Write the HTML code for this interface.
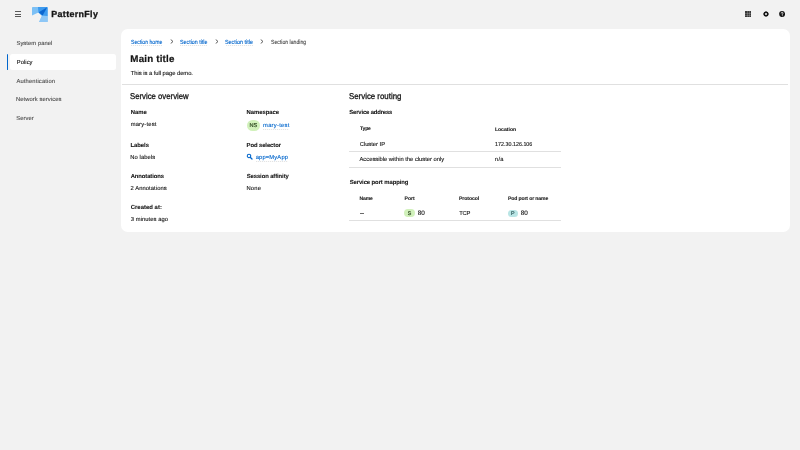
<!DOCTYPE html>
<html><head><meta charset="utf-8">
<style>
html,body{margin:0;padding:0;width:800px;height:450px;overflow:hidden;background:#f2f2f2;font-family:"Liberation Sans",sans-serif;}
#root{position:absolute;left:0;top:0;width:800px;height:450px;will-change:transform;}
.t{position:absolute;white-space:nowrap;line-height:1;text-rendering:geometricPrecision;-webkit-text-stroke:0.12px currentColor;}
.dot{position:absolute;height:1px;background:repeating-linear-gradient(90deg,rgba(120,120,120,.2) 0 1px,rgba(120,120,120,.04) 1px 2px);}
.abs{position:absolute;}
.ln{position:absolute;height:1px;background:#e0e0e0;}
</style></head><body><div id="root">
<!-- masthead: hamburger -->
<div class="abs" style="left:15.1px;top:11px;width:5.7px;height:1px;background:#5a5a5a"></div>
<div class="abs" style="left:15.1px;top:13.6px;width:5.7px;height:1px;background:#5a5a5a"></div>
<div class="abs" style="left:15.1px;top:16.2px;width:5.7px;height:1px;background:#5a5a5a"></div>
<!-- logo -->
<svg class="abs" style="left:32px;top:6.6px" width="16" height="15.4" viewBox="0 0 16 15.4">
  <path d="M0.8 0 H15 Q15.6 0 15.6 0.8 V14.4 Q15.6 15.2 14.8 15.2 H7 L10 8.8 L6.4 5.4 L0 8.6 V0.8 Q0 0 0.8 0Z" fill="#7cc0f5"/>
  <path d="M6 0 H15 Q15.6 0 15.6 0.8 V9 L10 8.8 L6.4 5.4Z" fill="#3d9bef"/>
  <path d="M15.2 0.3 L6.8 5.2 L10.6 8.6Z" fill="#0b66d0"/>
  <path d="M10 8.8 L15.6 9 V14.4 Q15.6 15.2 14.8 15.2 H7Z" fill="#8ec7f6"/>
</svg>
<!-- header icons -->
<div class="abs" style="left:745px;top:11.2px;width:6px;height:5.6px;background:#3a3a3a"><div class="abs" style="left:1.8px;top:0;width:0.6px;height:5.6px;background:rgba(242,242,242,.22)"></div><div class="abs" style="left:3.8px;top:0;width:0.6px;height:5.6px;background:rgba(242,242,242,.22)"></div><div class="abs" style="left:0;top:1.7px;width:6px;height:0.6px;background:rgba(242,242,242,.2)"></div><div class="abs" style="left:0;top:3.6px;width:6px;height:0.6px;background:rgba(242,242,242,.2)"></div></div>
<svg class="abs" style="left:762.55px;top:11.15px" width="6" height="6" viewBox="0 0 6 6">
 <circle cx="3" cy="3" r="1.75" fill="none" stroke="#151515" stroke-width="1.5"/>
 <g stroke="#151515" stroke-width="0.9"><path d="M3 0.3 V5.7"/><path d="M0.3 3 H5.7"/><path d="M1.1 1.1 L4.9 4.9"/><path d="M4.9 1.1 L1.1 4.9"/></g>
 <circle cx="3" cy="3" r="0.95" fill="#fff"/>
</svg>
<svg class="abs" style="left:779.2px;top:11px" width="6.2" height="6.2" viewBox="0 0 6.2 6.2">
 <circle cx="3.1" cy="3.1" r="3" fill="#151515"/>
 <path d="M2.2 2.4 Q2.2 1.4 3.1 1.4 Q4 1.4 4 2.3 Q4 2.9 3.3 3.2 V3.9" fill="none" stroke="#fff" stroke-width="0.8"/>
 <rect x="2.9" y="4.4" width="0.8" height="0.8" fill="#fff"/>
</svg>
<!-- nav current -->
<div class="abs" style="left:6.5px;top:53.9px;width:1.6px;height:15.9px;background:#0066cc;border-radius:1px"></div>
<div class="abs" style="left:10px;top:53.9px;width:106.2px;height:15.9px;background:#fff;border-radius:2.5px"></div>
<!-- card -->
<div class="abs" style="left:120.7px;top:28.7px;width:669.3px;height:202.9px;background:#fff;border-radius:6.7px"></div>
<!-- breadcrumb chevrons -->
<svg class="abs" style="left:169.5px;top:39.4px" width="4" height="5" viewBox="0 0 4 5"><path d="M0.7 0.5 L3 2.5 L0.7 4.5" fill="none" stroke="#4d4d4d" stroke-width="0.9"/></svg>
<svg class="abs" style="left:214.8px;top:39.4px" width="4" height="5" viewBox="0 0 4 5"><path d="M0.7 0.5 L3 2.5 L0.7 4.5" fill="none" stroke="#4d4d4d" stroke-width="0.9"/></svg>
<svg class="abs" style="left:260.4px;top:39.4px" width="4" height="5" viewBox="0 0 4 5"><path d="M0.7 0.5 L3 2.5 L0.7 4.5" fill="none" stroke="#4d4d4d" stroke-width="0.9"/></svg>
<!-- divider -->
<div class="ln" style="left:122.1px;top:84px;width:666.3px"></div>
<!-- NS badge -->
<div class="abs" style="left:246.7px;top:119.9px;width:13.7px;height:10.8px;background:#d1f1bb;border-radius:6px"></div>
<!-- search icon -->
<svg class="abs" style="left:246px;top:153px" width="7" height="7" viewBox="0 0 7 7">
 <circle cx="3" cy="2.95" r="1.75" fill="none" stroke="#0066cc" stroke-width="1.05"/>
 <path d="M4.2 4.2 L6 6" stroke="#0066cc" stroke-width="1.25" stroke-linecap="round"/>
</svg>
<!-- table lines -->
<div class="ln" style="left:349.4px;top:151px;width:211.8px"></div>
<div class="ln" style="left:349.4px;top:167px;width:211.8px"></div>
<div class="ln" style="left:349.4px;top:220px;width:211.8px"></div>
<div class="abs" style="left:359.8px;top:213px;width:4.6px;height:1px;background:#6a6a6a"></div>
<!-- S / P badges -->
<div class="abs" style="left:404.3px;top:209.3px;width:10.5px;height:7.8px;background:#d1f1bb;border-radius:4px"></div>
<div class="abs" style="left:507.9px;top:209.5px;width:10px;height:7.4px;background:#b9e5e5;border-radius:4px"></div>
<div class="t" style="left:51.27px;top:10px;font-size:8.9px;font-weight:700;color:#151515;letter-spacing:0.353px;-webkit-text-stroke:0.3px currentColor">PatternFly</div>
<div class="t" style="left:16.47px;top:42px;font-size:5.8px;font-weight:400;color:#4d4d4d;letter-spacing:0.068px">System panel</div>
<div class="t" style="left:16.74px;top:61px;font-size:5.8px;font-weight:400;color:#151515;letter-spacing:0.059px">Policy</div>
<div class="t" style="left:16.50px;top:80px;font-size:5.8px;font-weight:400;color:#4d4d4d;letter-spacing:0.136px">Authentication</div>
<div class="t" style="left:16.04px;top:98px;font-size:5.8px;font-weight:400;color:#4d4d4d;letter-spacing:0.079px">Network services</div>
<div class="t" style="left:16.27px;top:117px;font-size:5.8px;font-weight:400;color:#4d4d4d;letter-spacing:0.085px">Server</div>
<div class="t" style="left:130.70px;top:40px;font-size:6.1px;font-weight:400;color:#0066cc;transform:scaleX(0.8389);transform-origin:0 0">Section home</div>
<div class="dot" style="left:130.90px;top:45px;width:30.9px"></div>
<div class="t" style="left:179.79px;top:40px;font-size:6.1px;font-weight:400;color:#0066cc;transform:scaleX(0.8723);transform-origin:0 0">Section title</div>
<div class="dot" style="left:180.00px;top:45px;width:27.1px"></div>
<div class="t" style="left:225.38px;top:40px;font-size:6.1px;font-weight:400;color:#0066cc;transform:scaleX(0.8851);transform-origin:0 0">Section title</div>
<div class="dot" style="left:225.60px;top:45px;width:27.5px"></div>
<div class="t" style="left:271.04px;top:40px;font-size:6.1px;font-weight:400;color:#4d4d4d;transform:scaleX(0.8449);transform-origin:0 0">Section landing</div>
<div class="t" style="left:130.31px;top:55px;font-size:9.8px;font-weight:700;color:#151515;letter-spacing:0.186px;-webkit-text-stroke:0.2px currentColor">Main title</div>
<div class="t" style="left:130.78px;top:72px;font-size:5.8px;font-weight:400;color:#151515;letter-spacing:-0.027px">This is a full page demo.</div>
<div class="t" style="left:130.29px;top:92px;font-size:8.5px;font-weight:400;color:#151515;transform:scaleX(0.9129);transform-origin:0 0;-webkit-text-stroke:0.3px currentColor">Service overview</div>
<div class="t" style="left:349.09px;top:92px;font-size:8.5px;font-weight:400;color:#151515;transform:scaleX(0.9235);transform-origin:0 0;-webkit-text-stroke:0.3px currentColor">Service routing</div>
<div class="t" style="left:130.65px;top:111px;font-size:5.9px;font-weight:700;color:#151515;letter-spacing:0.063px;-webkit-text-stroke:0.08px currentColor">Name</div>
<div class="t" style="left:130.65px;top:123px;font-size:5.8px;font-weight:400;color:#151515;letter-spacing:0.208px">mary-test</div>
<div class="t" style="left:130.45px;top:144px;font-size:5.9px;font-weight:700;color:#151515;letter-spacing:-0.025px;-webkit-text-stroke:0.08px currentColor">Labels</div>
<div class="t" style="left:130.34px;top:156px;font-size:5.8px;font-weight:400;color:#151515;letter-spacing:0.070px">No labels</div>
<div class="t" style="left:130.68px;top:175px;font-size:5.9px;font-weight:700;color:#151515;letter-spacing:-0.098px;-webkit-text-stroke:0.08px currentColor">Annotations</div>
<div class="t" style="left:130.51px;top:187px;font-size:5.8px;font-weight:400;color:#151515;letter-spacing:0.091px">2 Annotations</div>
<div class="t" style="left:130.76px;top:206px;font-size:5.9px;font-weight:700;color:#151515;letter-spacing:0.037px;-webkit-text-stroke:0.08px currentColor">Created at:</div>
<div class="t" style="left:130.83px;top:218px;font-size:5.8px;font-weight:400;color:#151515;letter-spacing:0.062px">3 minutes ago</div>
<div class="t" style="left:246.55px;top:111px;font-size:5.9px;font-weight:700;color:#151515;letter-spacing:-0.036px;-webkit-text-stroke:0.08px currentColor">Namespace</div>
<div class="t" style="left:263.05px;top:124px;font-size:5.8px;font-weight:400;color:#0066cc;letter-spacing:0.258px">mary-test</div>
<div class="dot" style="left:263.40px;top:129px;width:25.9px"></div>
<div class="t" style="left:246.55px;top:144px;font-size:5.9px;font-weight:700;color:#151515;letter-spacing:-0.082px;-webkit-text-stroke:0.08px currentColor">Pod selector</div>
<div class="t" style="left:255.67px;top:156px;font-size:5.8px;font-weight:400;color:#0066cc;letter-spacing:0.153px">app=MyApp</div>
<div class="dot" style="left:255.90px;top:161px;width:31.9px"></div>
<div class="t" style="left:246.78px;top:175px;font-size:5.9px;font-weight:700;color:#151515;letter-spacing:-0.101px;-webkit-text-stroke:0.08px currentColor">Session affinity</div>
<div class="t" style="left:246.44px;top:187px;font-size:5.8px;font-weight:400;color:#151515;letter-spacing:0.219px">None</div>
<div class="t" style="left:349.28px;top:111px;font-size:5.9px;font-weight:700;color:#151515;letter-spacing:-0.149px;-webkit-text-stroke:0.08px currentColor">Service address</div>
<div class="t" style="left:359.95px;top:127px;font-size:5.1px;font-weight:700;color:#151515;letter-spacing:-0.180px;-webkit-text-stroke:0.08px currentColor">Type</div>
<div class="t" style="left:494.89px;top:128px;font-size:5.1px;font-weight:700;color:#151515;-webkit-text-stroke:0.08px currentColor">Location</div>
<div class="t" style="left:359.71px;top:143px;font-size:5.8px;font-weight:400;color:#151515;letter-spacing:-0.011px">Cluster IP</div>
<div class="t" style="left:494.82px;top:143px;font-size:5.8px;font-weight:400;color:#151515;transform:scaleX(0.9269);transform-origin:0 0">172.30.126.106</div>
<div class="t" style="left:359.50px;top:158px;font-size:5.8px;font-weight:400;color:#151515">Accessible within the cluster only</div>
<div class="t" style="left:494.85px;top:158px;font-size:5.8px;font-weight:400;color:#151515;letter-spacing:0.331px">n/a</div>
<div class="t" style="left:349.63px;top:181px;font-size:5.9px;font-weight:700;color:#151515;letter-spacing:-0.079px;-webkit-text-stroke:0.08px currentColor">Service port mapping</div>
<div class="t" style="left:359.44px;top:197px;font-size:5.1px;font-weight:700;color:#151515;letter-spacing:-0.150px;-webkit-text-stroke:0.08px currentColor">Name</div>
<div class="t" style="left:404.44px;top:197px;font-size:5.1px;font-weight:700;color:#151515;letter-spacing:0.040px;-webkit-text-stroke:0.08px currentColor">Port</div>
<div class="t" style="left:458.99px;top:197px;font-size:5.1px;font-weight:700;color:#151515;letter-spacing:-0.062px;-webkit-text-stroke:0.08px currentColor">Protocol</div>
<div class="t" style="left:507.89px;top:197px;font-size:5.1px;font-weight:700;color:#151515;letter-spacing:-0.119px;-webkit-text-stroke:0.08px currentColor">Pod port or name</div>
<div class="t" style="left:417.74px;top:211px;font-size:6.4px;font-weight:400;color:#151515">80</div>
<div class="t" style="left:459.18px;top:212px;font-size:5.8px;font-weight:400;color:#151515;letter-spacing:-0.156px">TCP</div>
<div class="t" style="left:520.74px;top:211px;font-size:6.4px;font-weight:400;color:#151515">80</div>
<div class="t" style="left:249.55px;top:124px;font-size:5.6px;font-weight:400;color:#2f4a22;letter-spacing:-0.124px;-webkit-text-stroke:0.2px currentColor">NS</div>
<div class="t" style="left:407.79px;top:212px;font-size:5.3px;font-weight:400;color:#2f4a22;-webkit-text-stroke:0.2px currentColor">S</div>
<div class="t" style="left:510.98px;top:212px;font-size:5.3px;font-weight:400;color:#2a5557;-webkit-text-stroke:0.2px currentColor">P</div>
</div></body></html>
